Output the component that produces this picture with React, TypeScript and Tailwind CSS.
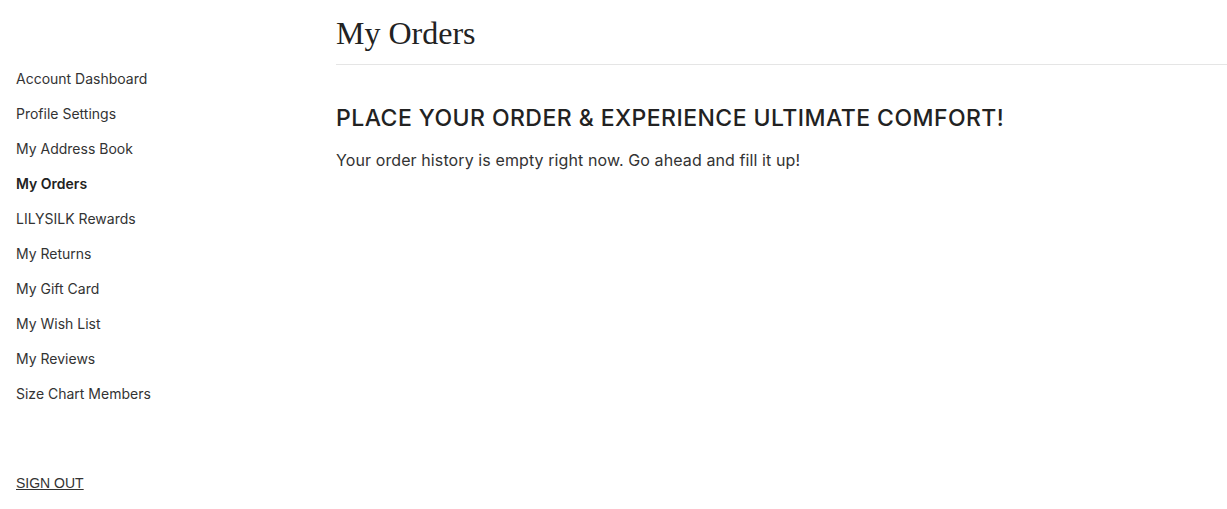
const menu = [
  "Account Dashboard",
  "Profile Settings",
  "My Address Book",
  "My Orders",
  "LILYSILK Rewards",
  "My Returns",
  "My Gift Card",
  "My Wish List",
  "My Reviews",
  "Size Chart Members",
];

export default function App() {
  return (
    <div className="flex min-h-[509px] bg-white text-[#333] font-['Inter',sans-serif]">
      {/* sidebar */}
      <aside className="w-[336px] shrink-0 pl-4 pt-[68px] flex flex-col">
        <ul className="flex flex-col">
          {menu.map((item) => (
            <li
              key={item}
              className={`h-[35px] text-[14px] leading-[22px] tracking-[0px] ${
                item === "My Orders" ? "font-semibold text-[#222]" : "text-[#333]"
              }`}
            >
              {item}
            </li>
          ))}
        </ul>
        <a
          href="#"
          className="mt-[55px] text-[14px] leading-[20px] underline text-[#333] font-['Liberation_Sans',sans-serif]"
        >
          SIGN OUT
        </a>
      </aside>

      {/* main */}
      <main className="flex-1">
        <h1 className="pt-[12px] pb-[10px] text-[32px] leading-[42px] text-[#222] border-b border-[#e5e5e5] font-['Liberation_Serif',serif]">
          My Orders
        </h1>
        <h2 className="mt-[38px] text-[23px] leading-[30px] font-medium text-[#222] tracking-[0.45px]">
          PLACE YOUR ORDER &amp; EXPERIENCE ULTIMATE COMFORT!
        </h2>
        <p className="mt-[15px] text-[16px] leading-[24px] text-[#333] tracking-[0.1px]">
          Your order history is empty right now. Go ahead and fill it up!
        </p>
      </main>
    </div>
  );
}
